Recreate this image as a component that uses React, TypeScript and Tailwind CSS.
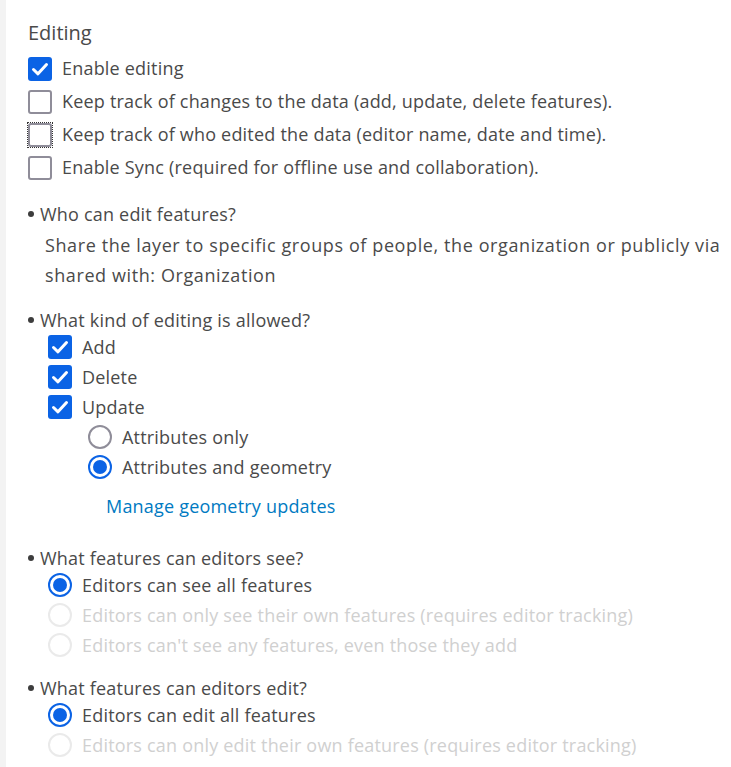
import React from "react";

const font = { fontFamily: "'Open Sans', 'Noto Sans', sans-serif" };

function Check({ checked, focus }: { checked?: boolean; focus?: boolean }) {
  if (checked) {
    return (
      <span className="flex h-[24px] w-[24px] shrink-0 items-center justify-center rounded-[3px] bg-[#0b63e5]">
        <svg width="24" height="24" viewBox="0 0 24 24">
          <path d="M5.5 12.5 L10 16.8 L18.5 7.5" fill="none" stroke="#fff" strokeWidth="3" strokeLinecap="round" strokeLinejoin="round" />
        </svg>
      </span>
    );
  }
  return (
    <span className={`flex h-[24px] w-[24px] shrink-0 items-center justify-center ${focus ? "outline-1 outline-dotted outline-[#333] outline-offset-0" : ""}`}>
      <span className="h-[24px] w-[24px] rounded-[3px] border-2 border-[#8f8d99] bg-white" />
    </span>
  );
}

function Radio({ checked, disabled }: { checked?: boolean; disabled?: boolean }) {
  if (checked) {
    return (
      <span className="flex h-[24px] w-[24px] shrink-0 items-center justify-center rounded-full border-2 border-[#0b63e5] bg-white">
        <span className="h-[14px] w-[14px] rounded-full bg-[#0b63e5]" />
      </span>
    );
  }
  return (
    <span
      className={`h-[24px] w-[24px] shrink-0 rounded-full border-2 bg-white ${disabled ? "border-[#eaeaea]" : "border-[#8f8d99]"}`}
    />
  );
}

function Row({ control, children, disabled, tall }: { control: React.ReactNode; children: React.ReactNode; disabled?: boolean; tall?: boolean }) {
  return (
    <div className={`flex items-center gap-[10px] ${tall ? "h-[33px]" : "h-[30px]"} ${disabled ? "text-[#d0d0d0]" : "text-[#4a4a4a]"}`}>
      {control}
      <span className="whitespace-nowrap">{children}</span>
    </div>
  );
}

function Bullet({ children }: { children: React.ReactNode }) {
  return (
    <div className="flex h-[24px] items-center whitespace-nowrap text-[#4a4a4a]">
      <span className="mr-[6px] h-[6px] w-[6px] shrink-0 rounded-full bg-[#3d3d3d]" />
      {children}
    </div>
  );
}

export default function App() {
  return (
    <div className="flex h-[767px] w-[731px] overflow-hidden bg-white text-[18px] tracking-[0.2px]" style={font}>
      <div className="w-[6px] shrink-0 bg-[#f3f3f3]" />
      <div className="flex-1 pl-[22px] pt-[18px]">
        <div className="h-[30px] text-[20px] leading-[30px] tracking-normal text-[#4a4a4a]">Editing</div>
        <div className="mt-[4px]">
          <Row tall control={<Check checked />}>Enable editing</Row>
          <Row tall control={<Check />}>Keep track of changes to the data (add, update, delete features).</Row>
          <Row tall control={<Check focus />}>Keep track of who edited the data (editor name, date and time).</Row>
          <Row tall control={<Check />}>Enable Sync (required for offline use and collaboration).</Row>
        </div>

        <div className="mt-[18px]">
          <Bullet>Who can edit features?</Bullet>
          <div className="pl-[17px] pt-[4px] leading-[30px] tracking-[0.6px] text-[#4a4a4a] whitespace-nowrap">
            <div>Share the layer to specific groups of people, the organization or publicly via</div>
            <div>shared with: Organization</div>
          </div>
        </div>

        <div className="mt-[18px]">
          <Bullet>What kind of editing is allowed?</Bullet>
          <div className="pl-[20px]">
            <Row control={<Check checked />}>Add</Row>
            <Row control={<Check checked />}>Delete</Row>
            <Row control={<Check checked />}>Update</Row>
            <div className="pl-[40px]">
              <Row control={<Radio />}>Attributes only</Row>
              <Row control={<Radio checked />}>Attributes and geometry</Row>
            </div>
            <div className="mt-[9px] h-[30px] pl-[58px] leading-[30px] text-[#007ac2]">Manage geometry updates</div>
          </div>
        </div>

        <div className="mt-[25px]">
          <Bullet>What features can editors see?</Bullet>
          <div className="pl-[20px]">
            <Row control={<Radio checked />}>Editors can see all features</Row>
            <Row disabled control={<Radio disabled />}>Editors can only see their own features (requires editor tracking)</Row>
            <Row disabled control={<Radio disabled />}>Editors can't see any features, even those they add</Row>
          </div>
        </div>

        <div className="mt-[16px]">
          <Bullet>What features can editors edit?</Bullet>
          <div className="pl-[20px]">
            <Row control={<Radio checked />}>Editors can edit all features</Row>
            <Row disabled control={<Radio disabled />}>Editors can only edit their own features (requires editor tracking)</Row>
          </div>
        </div>
      </div>
    </div>
  );
}
